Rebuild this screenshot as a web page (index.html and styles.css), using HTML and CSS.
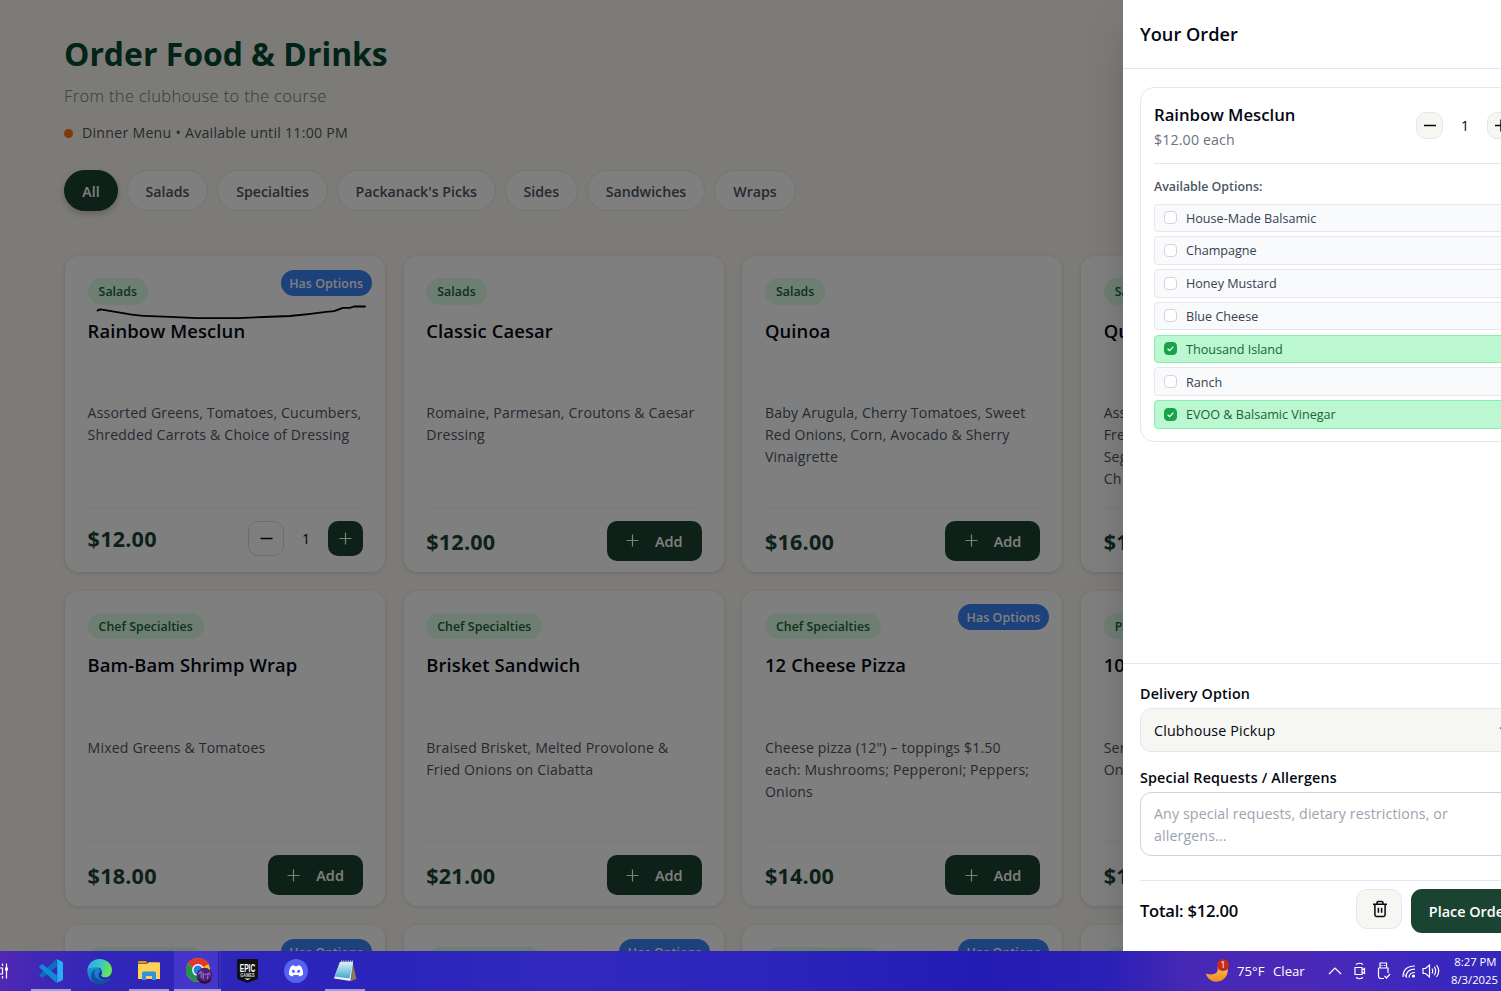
FILE: index.html
```html
<!DOCTYPE html>
<html lang="en">
<head>
<meta charset="utf-8">
<title>Order Food &amp; Drinks</title>
<link rel="stylesheet" href="styles.css">
</head>
<body>
<div class="app">
  <main class="menu">
    <h1 class="menu-title">Order Food &amp; Drinks</h1>
    <p class="menu-sub">From the clubhouse to the course</p>
    <p class="menu-status"><span class="dot"></span><span class="status-text">Dinner Menu • Available until 11:00 PM</span></p>
    <nav class="filters">
      <button class="pill pill-on" style="width:54px">All</button>
      <button class="pill" style="width:81px">Salads</button>
      <button class="pill" style="width:111px">Specialties</button>
      <button class="pill" style="width:158.5px">Packanack's Picks</button>
      <button class="pill" style="width:73.500px">Sides</button>
      <button class="pill" style="width:118px">Sandwiches</button>
      <button class="pill" style="width:82px">Wraps</button>
    </nav>
    <section class="grid" id="grid"></section>
  </main>
  <div class="overlay"></div>
  <svg class="ink" width="280" height="24" viewBox="90 300 280 24"><path d="M97.500 310.700Q99 309.200 102 309.600Q114 311.500 126 313.600T144 315.800L170 316.900L197 318.100H238L264 317L290 316Q308 314.500 326 311.900L334 311.200L343 307.800H350L354 306.500H365"/></svg>

  <aside class="drawer">
    <header class="drawer-head"><h2>Your Order</h2></header>
    <div class="drawer-body">
      <article class="line">
        <div class="line-top">
          <div><h3>Rainbow Mesclun</h3><p class="each">$12.00 each</p></div>
          <div class="qty">
            <button class="round"><svg width="14" height="14" viewBox="0 0 14 14"><path d="M1 7.500H13"/></svg></button>
            <span>1</span>
            <button class="round"><svg width="14" height="14" viewBox="0 0 14 14"><path d="M1 7.500H13M7 1.500V13.500"/></svg></button>
          </div>
        </div>
        <h4>Available Options:</h4>
        <ul class="options">
          <li><i class="box"></i>House-Made Balsamic</li>
          <li><i class="box"></i>Champagne</li>
          <li><i class="box"></i>Honey Mustard</li>
          <li><i class="box"></i>Blue Cheese</li>
          <li class="on"><i class="box"><svg width="13" height="13" viewBox="0 0 13 13"><path d="M3.600 6.700L5.600 8.600L9.400 4.600"/></svg></i>Thousand Island</li>
          <li><i class="box"></i>Ranch</li>
          <li class="on"><i class="box"><svg width="13" height="13" viewBox="0 0 13 13"><path d="M3.600 6.700L5.600 8.600L9.400 4.600"/></svg></i>EVOO &amp; Balsamic Vinegar</li>
        </ul>
      </article>
    </div>
    <footer class="drawer-foot">
      <label class="lbl">Delivery Option</label>
      <div class="select"><span>Clubhouse Pickup</span><svg width="14" height="14" viewBox="0 0 14 14"><path d="M1 4.500L7 10L13 4.500"/></svg></div>
      <label class="lbl lbl-2">Special Requests / Allergens</label>
      <div class="area">Any special requests, dietary restrictions, or<br>allergens...</div>
      <div class="total">
        <strong>Total: $12.00</strong>
        <button class="trash"><svg width="16" height="18" viewBox="0 0 16 18"><path d="M1 4.300H15M2.900 4.300V14.800Q2.900 16.400 4.500 16.400H11.500Q13.100 16.400 13.100 14.800V4.300M5 4.300V2.700Q5 1.400 6.300 1.400H9.700Q11 1.400 11 2.700V4.300M6.400 7.800V12.800M9.600 7.800V12.800"/></svg></button>
        <button class="place">Place Order</button>
      </div>
    </footer>
  </aside>
</div>

<div class="taskbar">
  <div class="task task-cut"><svg width="12" height="18" viewBox="0 0 12 18"><g stroke="#fff" stroke-width="1.200" fill="none"><path d="M0 6H2.500V12H0M2.500 1.500V4M2.500 14V16.500M6.500 1.500V16.500"/></g><path d="M5 5.500h3v3H5z" fill="#fff"/></svg></div>
  <div class="task run"><svg width="24" height="24" viewBox="0 0 24 24"><path d="M17.500 0L18 7.500L3.200 19L.4 16.600Q0 16.100 .5 15.600Z" fill="#0a6fc0"/><path d="M17.500 24L18 16.500L3.200 5L.4 7.400Q0 8 .5 8.500Z" fill="#118ad6"/><path d="M17.300 0L23 2.600Q24 3.100 24 4.200V19.800Q24 20.900 23 21.400L17.300 24Q18.200 23 18.200 21.500V2.500Q18.200 1 17.300 0Z" fill="#27aef3"/></svg></div>
  <div class="task edge"><svg width="25" height="25" viewBox="0 0 24 24"><defs><linearGradient id="e1" x1="0" y1="0" x2="1" y2=".3"><stop offset="0" stop-color="#2aa9e0"/><stop offset=".5" stop-color="#35c1d0"/><stop offset="1" stop-color="#66e25c"/></linearGradient><linearGradient id="e2" x1="0" y1="0" x2="1" y2="1"><stop offset="0" stop-color="#1b9de2"/><stop offset="1" stop-color="#0c59a4"/></linearGradient></defs><path d="M.3 10C0 18 5 24 12 24C17 24 20.500 21.500 22.300 18.300L13 11L9 6Z" fill="url(#e2)"/><path d="M.3 10C1.400 4 6.200 0 12 0C19 0 24 5 24 10.500C24 15 21 17.500 17.500 17.500C14.500 17.500 13.200 16 13.800 15C15.300 13 14.500 8 9 8C5 8 1.500 9.300 .3 10Z" fill="url(#e1)"/><path d="M9 9.500C5 12 7 20 14 20.700C18 21 20.500 19.800 22.300 18.300C20 24 12 25.500 7 22.800C2 19 3.500 11 9 9.500Z" fill="#134f9e"/><path d="M13.700 15C13 16.300 14.800 17.800 18 17.800C20.300 17.800 22 16.800 23.200 15.500L22.300 18.300Q19 20 16.500 19.800C13.500 19.500 11.300 17.800 11.300 15.500C11.300 13.500 12.500 12.200 13.400 11.600C14.600 12.500 14.500 14 13.700 15Z" fill="#2b22b6"/></svg></div>
  <div class="task run"><svg width="22" height="20" viewBox="0 0 22 20"><path d="M0 1Q0 0 1 0H8L10 2.500H0Z" fill="#dd9a05"/><path d="M0 3H9L11 1.200H21Q22 1.200 22 2.200V18H0Z" fill="#fdd256"/><path d="M4 19V12Q4 10.500 5.500 10.500H16.500Q18 10.500 18 12V19H14V15H8V19Z" fill="#2f94df"/></svg></div>
  <div class="task run active"><svg width="27" height="26" viewBox="0 0 27 26"><circle cx="12" cy="12" r="12" fill="#fbbd0c"/><path d="M12 12L1.600 6A12 12 0 0 1 22.400 6Z" fill="#e2382b"/><path d="M12 12L1.600 6A12 12 0 0 0 12 24L17 15Z" fill="#23924a"/><path d="M12 6H22.400" stroke="#e2382b" stroke-width=".8"/><circle cx="12" cy="12" r="5.900" fill="#fff"/><circle cx="12" cy="12" r="4.500" fill="#2b7be4"/><circle cx="18.500" cy="17.800" r="8" fill="#4a2378"/><path d="M11.500 20Q18.500 27 25.500 20Q24 25.500 18.500 25.800Q13 25.500 11.500 20Z" fill="#241038"/><path d="M12.500 16L15 13.500L15.500 20M17 14L17.500 21M17.500 17L22 15.500L21.500 21M22.500 14.500L24.500 17" stroke="#9a66cc" stroke-width="1.200" fill="none"/></svg></div>
  <div class="task"><svg width="21" height="24" viewBox="0 0 21 24"><path d="M1 0H20Q21 0 21 1V18.500Q21 20 19.800 20.500L10.500 24L1.200 20.500Q0 20 0 18.500V1Q0 0 1 0Z" fill="#101010"/><text x="10.500" y="12.500" text-anchor="middle" textLength="15.500" lengthAdjust="spacingAndGlyphs" class="epic">EPIC</text><text x="10.500" y="17.500" text-anchor="middle" textLength="14.500" lengthAdjust="spacingAndGlyphs" class="games">GAMES</text><path d="M7 19.500H14L10.500 21Z" fill="#fff"/></svg></div>
  <div class="task"><svg width="24" height="24" viewBox="0 0 24 24"><circle cx="12" cy="12" r="12" fill="#5563ee"/><path d="M7 7.300Q8.500 6.500 10 6.300L10.600 7.300H13.400L14 6.300Q15.500 6.500 17 7.300Q19.500 11 19.200 15.500Q17.500 17 15.300 17.400L14.500 16H9.500L8.700 17.400Q6.500 17 4.800 15.500Q4.500 11 7 7.300Z" fill="#fff"/><circle cx="9.400" cy="12.300" r="1.500" fill="#5563ee"/><circle cx="14.600" cy="12.300" r="1.500" fill="#5563ee"/></svg></div>
  <div class="task run"><svg width="24" height="22" viewBox="0 0 24 22"><defs><linearGradient id="n1" x1="0" y1="0" x2="0" y2="1"><stop offset="0" stop-color="#dcf4f8"/><stop offset="1" stop-color="#3fa9c9"/></linearGradient></defs><path d="M19.500 2L23.500 19L18 21Z" fill="#8a7a58"/><path d="M7 2L20 2L17.500 21L1 18.500Z" fill="#eef2f2"/><path d="M7 2L20 2L16.500 18.500L1.500 16.500Z" fill="url(#n1)"/><path d="M8 1.500H20" stroke="#c9d3d6" stroke-width="1.800" stroke-dasharray="1 .8"/></svg></div>
  <div class="tray">
    <svg width="26" height="26" viewBox="0 0 26 26"><defs><linearGradient id="moon" x1="0" y1="0" x2="0" y2="1"><stop offset="0" stop-color="#fcc255"/><stop offset="1" stop-color="#f08a1c"/></linearGradient></defs><path d="M13.500 9C15 15 10 18 2 15.500C4 25 17 26.500 22 18.500C23.700 15.500 24 13 23.500 10L15 8Z" fill="url(#moon)"/><circle cx="19" cy="7" r="6" fill="#c42b1c"/><text x="19" y="10.400" text-anchor="middle" class="badge-n">1</text></svg>
    <span class="temp">75°F</span><span class="clear">Clear</span>
    <svg class="tray-i chev" width="14" height="16" viewBox="0 0 14 16"><path d="M1 11L7 5L13 11"/></svg>
    <svg class="tray-i cam" width="14" height="18" viewBox="0 0 14 18"><path d="M2 5.500H9V12.500H2ZM9 8L11.500 6.500V11.500L9 10M3 2.500Q6.500 0 10 2.500M3 15.500Q6.500 18 10 15.500"/></svg>
    <svg class="tray-i usb" width="14" height="18" viewBox="0 0 14 18"><path d="M3 6V1H9.500V6M1.500 6H11V11M1.500 6V14Q1.500 16.500 4 16.500H7M5 3V4M7.500 3V4M7.500 14L9.500 16L13 12"/></svg>
    <svg class="tray-i wifi" width="14" height="16" viewBox="0 0 14 16"><path d="M1 14Q1 3 13 3M4 14.500Q4 6.200 13 6.200M7 14.500Q7.300 9.500 13 9.500"/><circle cx="11.500" cy="13" r="1.600" fill="#fff" stroke="none"/><path d="M1 10L5 14.500" stroke-width=".7"/></svg>
    <svg class="tray-i vol" width="18" height="16" viewBox="0 0 18 16"><path d="M1 5.500H3.500L7.500 2V14L3.500 10.500H1ZM10 5.500Q11.500 8 10 10.500M12.300 3.800Q15 8 12.300 12.200M14.500 2Q19 8 14.500 14"/></svg>
    <div class="clock"><span class="time">8:27 PM</span><span class="date">8/3/2025</span></div>
  </div>
</div>
<script src="menu.js"></script>
</body>
</html>
```
FILE: menu.js
```javascript
const items = [
  { tag: 'Salads', name: 'Rainbow Mesclun', desc: ['Assorted Greens, Tomatoes, Cucumbers,', 'Shredded Carrots & Choice of Dressing'], price: '$12.00', opts: true, qty: 1 },
  { tag: 'Salads', name: 'Classic Caesar', desc: ['Romaine, Parmesan, Croutons & Caesar', 'Dressing'], price: '$12.00' },
  { tag: 'Salads', name: 'Quinoa', desc: ['Baby Arugula, Cherry Tomatoes, Sweet', 'Red Onions, Corn, Avocado & Sherry', 'Vinaigrette'], price: '$16.00' },
  { tag: 'Sal', name: 'Qu', desc: ['Ass', 'Fre', 'Seg', 'Ch'], price: '$1' },
  { tag: 'Chef Specialties', name: 'Bam-Bam Shrimp Wrap', desc: ['Mixed Greens & Tomatoes'], price: '$18.00' },
  { tag: 'Chef Specialties', name: 'Brisket Sandwich', desc: ['Braised Brisket, Melted Provolone &', 'Fried Onions on Ciabatta'], price: '$21.00' },
  { tag: 'Chef Specialties', name: '12 Cheese Pizza', desc: ['Cheese pizza (12") – toppings $1.50', 'each: Mushrooms; Pepperoni; Peppers;', 'Onions'], price: '$14.00', opts: true },
  { tag: 'Pac', name: '10', desc: ['Ser', 'On'], price: '$1' },
  { tag: 'Chef Specialties', opts: true },
  { tag: 'Chef Specialties', opts: true },
  { tag: 'Chef Specialties', opts: true },
  { tag: 'Pac' },
];
const esc = s => s.replace(/&/g, '&amp;');
const plus = '<svg width="13" height="13" viewBox="0 0 13 13"><path d="M.5 6.500H12.500M6.500 .5V12.500"/></svg>';
const minus = '<svg width="13" height="13" viewBox="0 0 13 13"><path d="M.5 6.500H12.500"/></svg>';
document.getElementById('grid').innerHTML = items.map(i => `
  <article class="card">
    ${i.opts ? '<span class="has">Has Options</span>' : ''}
    <span class="tag">${i.tag}</span>
    ${i.name ? `<h3 class="name">${i.name}</h3>
    <p class="desc">${i.desc.map(esc).join('<br>')}</p>
    <div class="buy${i.qty ? ' buy-qty' : ''}"><b class="price">${i.price}</b>${i.qty
      ? `<div class="stepper"><button class="step minus">${minus}</button><span>${i.qty}</span><button class="step">${plus}</button></div>`
      : `<button class="add">${plus}Add</button>`}</div>` : ''}
  </article>`).join('');
```
FILE: styles.css
```css
* { box-sizing: border-box; margin: 0; padding: 0; }
body { width: 1501px; height: 991px; overflow: hidden; font-family: "Open Sans", "Noto Sans", sans-serif; font-size: 14px; color: #030712; }
button { font: inherit; color: inherit; border: 0; background: none; display: flex; align-items: center; justify-content: center; flex: none; }
svg { flex: none; fill: none; }
.app { position: relative; height: 951px; overflow: hidden; background: #faf6ee; }
.menu { width: 1500px; padding: 30px 0 0 64px; white-space: nowrap; }
.menu-title { font-size: 31.900px; line-height: 48px; font-weight: 700; color: #05472f; }
.menu-sub { font-size: 16.500px; letter-spacing: .34px; line-height: 26px; margin-top: 4.500px; color: #64748b; font-weight: 350; }
.menu-status { display: flex; align-items: center; gap: 9px; margin-top: 14.500px; line-height: 20px; font-size: 14.200px; letter-spacing: .24px; color: #4b5563; }
.dot { width: 9px; height: 9px; border-radius: 50%; background: #f97316; }
.filters { display: flex; gap: 9px; margin-top: 27px; }
.pill { height: 41px; padding-top: 1.500px; border-radius: 21px; background: #fff; border: 1px solid #e5e7eb; font-size: 14.200px; font-weight: 600; color: #4b5563; }
.pill-on { background: #1b4332; border-color: #1b4332; color: #fff; box-shadow: 0 3px 6px rgba(0,0,0,.2); }
.grid { display: grid; grid-template-columns: repeat(4, 320px); grid-auto-rows: 315.500px; gap: 19px 18.700px; margin: 45.100px 0 0 1.100px; }
.card { position: relative; display: flex; flex-direction: column; align-items: flex-start; background: #fff; border-radius: 14px; padding: 22.400px 22.500px 11px; box-shadow: 0 1px 4px rgba(0,0,0,.13); }
.has { position: absolute; top: 13.500px; right: 13.500px; width: 91px; height: 26px; border-radius: 13px; background: #3b82f6; color: #fff; font-size: 12.400px; letter-spacing: .08px; font-weight: 600; line-height: 27px; text-align: center; }
.tag { height: 26.500px; line-height: 28px; padding: 0 11px; border-radius: 14px; background: #dcfce7; color: #166534; font-size: 12.300px; letter-spacing: .05px; font-weight: 600; }
.name { font-size: 18.400px; letter-spacing: .12px; line-height: 26px; font-weight: 600; margin-top: 13px; }
.desc { margin-top: 58.300px; font-size: 14.100px; letter-spacing: .17px; line-height: 22px; color: #4b5563; }
.buy { margin-top: auto; width: 275.500px; border-top: 1px solid #f1f2f4; height: 54px; display: flex; align-items: flex-start; justify-content: space-between; padding-top: 13px; }
.price { font-size: 21.600px; letter-spacing: .2px; line-height: 41px; color: #1b4332; }
.buy-qty .price { line-height: 36px; }
.add { width: 95px; height: 40px; border-radius: 10px; background: #1b4332; color: #fff; font-weight: 600; font-size: 14.500px; gap: 16px; padding-top: 1px; }
.add svg { margin-top: -1px; }
.add svg, .step svg { stroke: #fff; stroke-width: 1.200; }
.stepper { display: flex; align-items: center; }
.stepper span { width: 44px; text-align: center; font-size: 14px; }
.step { width: 35px; height: 35px; border-radius: 10px; background: #1b4332; }
.step.minus { width: 36px; background: #fefdf9; border: 1px solid #d9dbe0; }
.step.minus svg { stroke: #030712; stroke-width: 1.500; }
.overlay { position: absolute; inset: 0; background: rgba(0,0,0,.5); }
.ink { position: absolute; left: 90px; top: 300px; stroke: #000; stroke-width: 1.800; stroke-linejoin: round; stroke-linecap: round; }

.drawer { position: absolute; left: 1123px; top: 0; width: 422px; height: 951px; display: flex; flex-direction: column; background: #fff; box-shadow: 0 22px 45px -11px rgba(0,0,0,.25); white-space: nowrap; }
.drawer-head { height: 69px; padding: 21px 17px; border-bottom: 1px solid #e2e8f0; }
.drawer-head h2 { font-size: 18.200px; line-height: 26px; font-weight: 600; }
.drawer-body { flex: 1; padding: 18px 17px; }
.line { border: 1px solid #e5e7eb; border-radius: 14px; height: 355px; padding: 13px; }
.line-top { display: flex; justify-content: space-between; height: 63px; border-bottom: 1px solid #e5e7eb; }
.line-top h3 { font-size: 16.700px; line-height: 28px; font-weight: 600; }
.each { font-size: 14.200px; letter-spacing: .14px; line-height: 22px; color: #6b7280; }
.qty { display: flex; align-items: center; height: 48.500px; }
.qty span { width: 44px; text-align: center; }
.round { width: 27px; height: 27px; border-radius: 10px; background: #f6f6f2; border: 1px solid #e2e8f0; }
.round svg { stroke: #030712; stroke-width: 1.500; }
.line h4 { font-size: 12.400px; line-height: 20px; margin: 13px 0 6.500px; font-weight: 600; color: #4b5563; }
.options { list-style: none; display: flex; flex-direction: column; gap: 4.200px; }
.options li { display: flex; align-items: center; height: 28.600px; padding: .6px 0 0 9px; gap: 9px; border: 1px solid #e5e7eb; border-radius: 4px; background: #f9fafb; font-size: 12.600px; color: #374151; }
.box { width: 13px; height: 13px; border: 1px solid #d1d5db; border-radius: 4px; display: flex; align-items: center; justify-content: center; background: #fff; margin-top: -1px; }
.options .on { background: #bbf7d0; border-color: #86efac; color: #166534; }
.on .box { background: #16a34a; border-color: #16a34a; }
.box svg { stroke: #fff; stroke-width: 1.200; }
.drawer-foot { height: 288px; border-top: 1px solid #e2e8f0; padding: 19px 17px 0; }
.lbl { display: block; font-size: 14.300px; letter-spacing: .16px; line-height: 22px; font-weight: 600; }
.select { display: flex; align-items: center; justify-content: space-between; height: 44px; margin-top: 3px; padding: 0 14px 0 13px; border: 1px solid #e2e8f0; border-radius: 11px; background: #f6f6f2; font-size: 14.300px; letter-spacing: .15px; }
.select svg { stroke: #6b7280; stroke-width: 1.500; }
.lbl-2 { margin-top: 15px; }
.area { height: 64px; margin-top: 3px; padding: 10px 13px; border: 1px solid #d1d5db; border-radius: 11px; color: #9ca3af; font-size: 14.200px; letter-spacing: .12px; line-height: 22px; }
.total { display: flex; margin-top: 24px; padding-top: 8px; border-top: 1px solid #e2e8f0; }
.total strong { font-size: 16.600px; letter-spacing: -.25px; line-height: 44px; font-weight: 600; width: 216px; }
.trash { width: 46px; height: 40px; border: 1px solid #e2e8f0; border-radius: 11px; background: #f6f6f2; margin-right: 9px; }
.trash svg { stroke: #030712; stroke-width: 1.500; margin-left: 1px; }
.place { width: 117px; height: 44px; border-radius: 11px; background: #1b4332; color: #fff; font-weight: 600; font-size: 14.400px; }

.taskbar { position: relative; height: 40px; display: flex; overflow: hidden; background: linear-gradient(90deg, #5128b2 0, #3f28b6 40px, #3026b8 110px, #2b24bb 400px, #3228bd 560px, #2c24bb 760px, #241bb4 980px, #2b20b5 1110px, #4728b5 1190px, #4b29b8 1300px, #3f28bd 1400px, #3328bd 1501px); white-space: nowrap; }
.task { position: relative; width: 49px; flex: none; display: flex; align-items: center; justify-content: center; }
.task-cut { width: 26.500px; justify-content: flex-start; }
.edge { padding-right: 2px; }
.run::after { content: ""; position: absolute; left: 4.500px; bottom: 0; width: 40px; height: 2px; background: #a59ce0; }
.active { background: linear-gradient(90deg, #4635cb 0, #4635cb 44px, #2a1f8a 44px, #3c2fc0 46px, transparent 48px); padding-left: 3px; }
.active::after { left: .500px; width: 47px; }
.epic { font: 700 10px "Liberation Sans", sans-serif; fill: #fff; }
.games { font: 700 4.500px "Liberation Sans", sans-serif; fill: #ddd; }
.badge-n { font: 9.500px "Open Sans", sans-serif; fill: #fff; }
.tray { margin-left: auto; width: 297px; flex: none; display: flex; align-items: center; color: #fff; font-size: 13.200px; }
.temp { margin-left: 7px; width: 36px; }
.clear { width: 55px; }
.tray-i { stroke: #fff; stroke-width: 1.200; }
.cam { margin-left: 11px; }
.usb { margin-left: 10px; }
.wifi { margin-left: 11px; }
.vol { margin-left: 6px; }
.clock { margin-left: auto; display: flex; flex-direction: column; align-items: flex-end; padding-right: 3px; font-size: 11.300px; line-height: 18px; margin-top: -1px; }
.time { margin-right: 1.500px; }
```
